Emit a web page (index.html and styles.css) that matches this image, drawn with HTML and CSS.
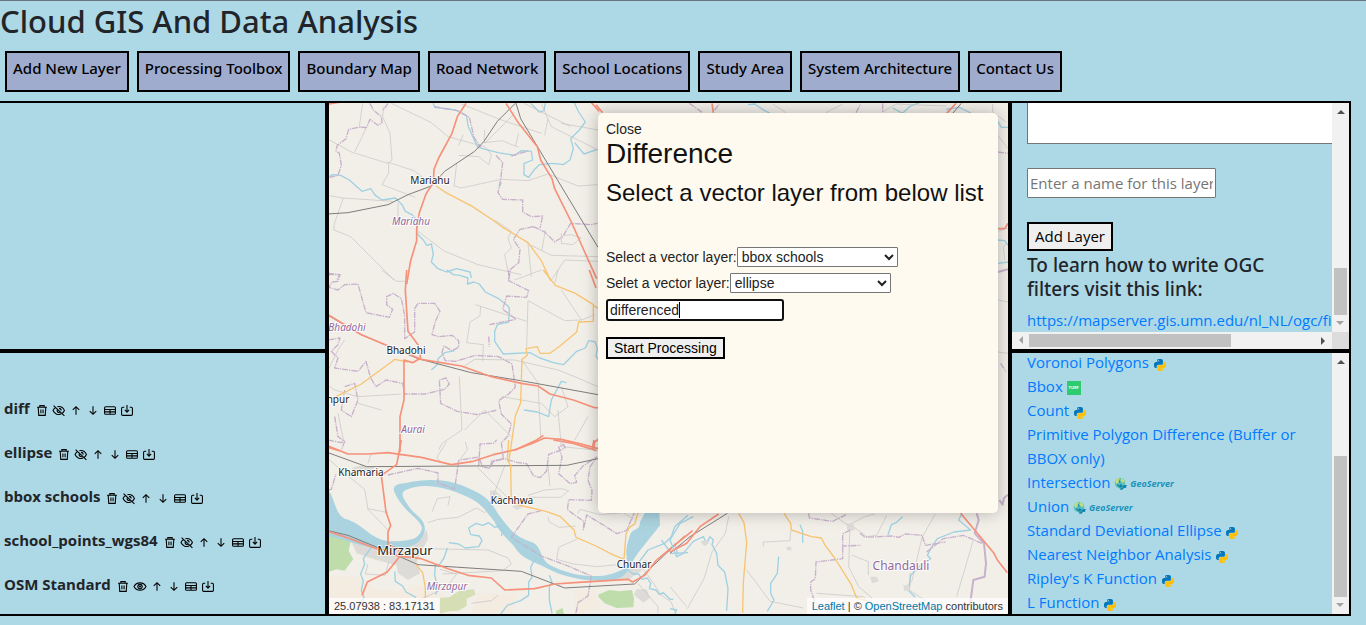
FILE: index.html
```
<!DOCTYPE html>
<html lang="en">
<head>
<meta charset="utf-8">
<title>Cloud GIS And Data Analysis</title>
<link rel="stylesheet" href="styles.css">
</head>
<body>
<svg class="defs" aria-hidden="true">
  <symbol id="trash" viewBox="0 0 24 24"><path d="M3 6h18M8 6V3h8v3M5 6l1 15h12l1-15M10 10v7M14 10v7"/></symbol>
  <symbol id="eye-off" viewBox="0 0 24 24"><path d="M2 3l20 19M9 5c6-1 11 2 13 7-1 2-2 4-4 5M6 6c-2 1-4 4-5 6 3 7 10 9 15 6M9 10c-2 4 2 7 5 5M12 8c2 0 4 2 4 4"/></symbol>
  <symbol id="eye" viewBox="0 0 24 24"><path d="M1 12c4-9 18-9 22 0-4 9-18 9-22 0z"/><circle cx="12" cy="12" r="4"/><circle cx="12" cy="12" r="1"/></symbol>
  <symbol id="up" viewBox="0 0 24 24"><path d="M12 20V5M6 11l6-6 6 6"/></symbol>
  <symbol id="down" viewBox="0 0 24 24"><path d="M12 4v15M6 13l6 6 6-6"/></symbol>
  <symbol id="table" viewBox="0 0 24 24"><path d="M4 5h16q2 0 2 2v10q0 2-2 2H4q-2 0-2-2V7q0-2 2-2zM2 10h20M2 14.500h20M12 10v9"/></symbol>
  <symbol id="save" viewBox="0 0 24 24"><path d="M7 6H4q-2 0-2 2v11q0 2 2 2h16q2 0 2-2V8q0-2-2-2h-3M12 2v13M8 11l4 4 4-4"/></symbol>
  <symbol id="python" viewBox="0 0 24 24">
    <path fill="#0277bd" d="M14.25.18l.9.2.73.26.59.3.45.32.34.34.25.34.16.33.1.3.04.26.02.2-.01.13V8.5l-.05.63-.13.55-.21.46-.26.38-.3.31-.33.25-.35.19-.35.14-.33.1-.3.07-.26.04-.21.02H8.77l-.69.05-.59.14-.5.22-.41.27-.33.32-.27.35-.2.36-.15.37-.1.35-.07.32-.04.27-.02.21v3.06H3.17l-.21-.03-.28-.07-.32-.12-.35-.18-.36-.26-.36-.36-.35-.46-.32-.59-.28-.73-.21-.88-.14-1.05-.05-1.23.06-1.22.16-1.04.24-.87.32-.71.36-.57.4-.44.42-.33.42-.24.4-.16.36-.1.32-.05.24-.01h.16l.06.01h8.16v-.83H6.18l-.01-2.75-.02-.37.05-.34.11-.31.17-.28.25-.26.31-.23.38-.2.44-.18.51-.15.58-.12.64-.1.71-.06.77-.04.84-.02 1.27.05zm-6.3 1.98l-.23.33-.08.41.08.41.23.34.33.22.41.09.41-.09.33-.22.23-.34.08-.41-.08-.41-.23-.33-.33-.22-.41-.09-.41.09z"/>
    <path fill="#ffc107" transform="rotate(180 12 12)" d="M14.25.18l.9.2.73.26.59.3.45.32.34.34.25.34.16.33.1.3.04.26.02.2-.01.13V8.5l-.05.63-.13.55-.21.46-.26.38-.3.31-.33.25-.35.19-.35.14-.33.1-.3.07-.26.04-.21.02H8.77l-.69.05-.59.14-.5.22-.41.27-.33.32-.27.35-.2.36-.15.37-.1.35-.07.32-.04.27-.02.21v3.06H3.17l-.21-.03-.28-.07-.32-.12-.35-.18-.36-.26-.36-.36-.35-.46-.32-.59-.28-.73-.21-.88-.14-1.05-.05-1.23.06-1.22.16-1.04.24-.87.32-.71.36-.57.4-.44.42-.33.42-.24.4-.16.36-.1.32-.05.24-.01h.16l.06.01h8.16v-.83H6.18l-.01-2.75-.02-.37.05-.34.11-.31.17-.28.25-.26.31-.23.38-.2.44-.18.51-.15.58-.12.64-.1.71-.06.77-.04.84-.02 1.27.05zm-6.3 1.98l-.23.33-.08.41.08.41.23.34.33.22.41.09.41-.09.33-.22.23-.34.08-.41-.08-.41-.23-.33-.33-.22-.41-.09-.41.09z"/>
  </symbol>
  <symbol id="globe" viewBox="0 0 42 42">
    <circle cx="18" cy="18" r="16" fill="#5cc0b8"/>
    <path fill="#c5dc7a" d="M3 13Q8 3 17 3L14 15 8 22zM21 3q9 3 12 11l-8 3-5-6z"/>
    <path fill="#0f80b4" d="M14 8l5 5-1 7 5 3 3 4 6-3 9 1-5 3 1 4-7 1-6 6-5-2-2-6-6-4-3-6 6 2 3 3 2-3-3-7z"/>
    <path fill="#35a7a7" d="M16 32l4 8 3-6 7-3-5-3z"/>
  </symbol>
</svg>

<header class="header">
  <h1 class="title">Cloud GIS And Data Analysis</h1>
  <nav class="nav">
    <button class="nav-button">Add New Layer</button>
    <button class="nav-button">Processing Toolbox</button>
    <button class="nav-button">Boundary Map</button>
    <button class="nav-button">Road Network</button>
    <button class="nav-button">School Locations</button>
    <button class="nav-button">Study Area</button>
    <button class="nav-button">System Architecture</button>
    <button class="nav-button">Contact Us</button>
  </nav>
</header>

<main class="main">
  <section class="side left">
    <div class="legend"></div>
    <div class="layers">
      <div class="layer"><span>diff</span>
        <button class="tool" aria-label="Delete"><svg><use href="#trash"/></svg></button><button class="tool" aria-label="Hide"><svg><use href="#eye-off"/></svg></button><button class="tool" aria-label="Move up"><svg><use href="#up"/></svg></button><button class="tool" aria-label="Move down"><svg><use href="#down"/></svg></button><button class="tool" aria-label="Table"><svg><use href="#table"/></svg></button><button class="tool" aria-label="Download"><svg><use href="#save"/></svg></button></div>
      <div class="layer"><span>ellipse</span>
        <button class="tool" aria-label="Delete"><svg><use href="#trash"/></svg></button><button class="tool" aria-label="Hide"><svg><use href="#eye-off"/></svg></button><button class="tool" aria-label="Move up"><svg><use href="#up"/></svg></button><button class="tool" aria-label="Move down"><svg><use href="#down"/></svg></button><button class="tool" aria-label="Table"><svg><use href="#table"/></svg></button><button class="tool" aria-label="Download"><svg><use href="#save"/></svg></button></div>
      <div class="layer"><span>bbox schools</span>
        <button class="tool" aria-label="Delete"><svg><use href="#trash"/></svg></button><button class="tool" aria-label="Hide"><svg><use href="#eye-off"/></svg></button><button class="tool" aria-label="Move up"><svg><use href="#up"/></svg></button><button class="tool" aria-label="Move down"><svg><use href="#down"/></svg></button><button class="tool" aria-label="Table"><svg><use href="#table"/></svg></button><button class="tool" aria-label="Download"><svg><use href="#save"/></svg></button></div>
      <div class="layer"><span>school_points_wgs84</span>
        <button class="tool" aria-label="Delete"><svg><use href="#trash"/></svg></button><button class="tool" aria-label="Hide"><svg><use href="#eye-off"/></svg></button><button class="tool" aria-label="Move up"><svg><use href="#up"/></svg></button><button class="tool" aria-label="Move down"><svg><use href="#down"/></svg></button><button class="tool" aria-label="Table"><svg><use href="#table"/></svg></button><button class="tool" aria-label="Download"><svg><use href="#save"/></svg></button></div>
      <div class="layer"><span>OSM Standard</span>
        <button class="tool" aria-label="Delete"><svg><use href="#trash"/></svg></button><button class="tool" aria-label="Show"><svg><use href="#eye"/></svg></button><button class="tool" aria-label="Move up"><svg><use href="#up"/></svg></button><button class="tool" aria-label="Move down"><svg><use href="#down"/></svg></button><button class="tool" aria-label="Table"><svg><use href="#table"/></svg></button><button class="tool" aria-label="Download"><svg><use href="#save"/></svg></button></div>
    </div>
  </section>

  <section class="map">
    <svg class="map-canvas" viewBox="329 103 679 511" preserveAspectRatio="xMidYMid slice" role="img" aria-label="Map">
      <!-- south-west: river, forest and towns -->
      <g transform="translate(328 440) scale(.333333)">
        <path class="urban" d="M60 284l60 8 60 20 50 6 50-20 16-30 4 30-20 36-14 30 10 36-36 20-30-20-4-24-60-16-60-20zM72 84l28-8 40 6-10 14-50 4zM486 150l20 4 20 22-20 14-20-14zM552 198l24-4 8 8-18 8zM872 400l50-20 30-20 10 6-26 30-36 24-28-4zM926 448l30 0 10 26-20 14-28-24z"/>
        <path class="scrub" d="M0 410l90 0 60 40 60 4 60-20 70 20 30 70H0zM740 450l60 0 20 60-80 10zM450 460l120 0-20 60-120 0z"/>
        <path class="wood" d="M0 280l42 6 26 20-6 26 14 26-16 20-10 14-24-4-26 8zM810 464l34-14 30 4 38-4 6 26-2 26-50 2-36-14-18-18zM684 512l20-8 4 18-24 0z"/>
        <path class="grass" d="M334 474l30-2 30-20 44-4 4 16-26 12 0 22-24 14-30 2-30 8z"/>
        <path class="river" d="M0 148c22 30 20 72 50 88 60 16 70 60 136 68 60 0 90-6 96-40-6-30-60-50-84-110-4-20 10-22 40-26 70-16 140-8 190 20 40 16 64 40 80 70 30 40 50 70 96 86 40 10 28 50 60 70 50 26 100 36 150 34 30-2 46-10 76-22 20-30-10-30 16-100 6-24 30-10 30-40l16-30 42 0 2 40c-30 40-64 76-84 112-14 36-34 50-66 54-60 4-140-10-186-36-50-24-80-30-104-70-10-10-50-50-56-70-24-30-40-54-64-66-50-28-120-48-170-40-50 10-50 20-30 50 20 36 60 44 54 84-10 50-70 56-130 52-60-4-120-32-160-38z"/>
        <path class="stream" d="M130 322l-10 14-14 20 4 16-12 30 8 20-6 30 8 20-20 30M200 394l2 30 22 14 10 18 30 16M322 374l-2 30 8 40-4 20M358 324l-10 30-18 26M362 308l30 4 20 12 40-4 10-18-8-14-26-4-6-20 22-14 20 6 18-8 18 14 16-4 8 14-4 16M628 354l-10 8-10 20 4 30-10 14 0 40-24 16-40 14-20 26M664 406l8 20-8 14 0 40 8 40M900 390l16 12 16 0 10 16 16-4 10 16-4 16 20 4 10 14 12-6 20 20 10 0M930 370l30-40 50-20 20-20 10-30 40-34M1000 300l30 40 50-2M1040 310l10 34"/>
        <path class="minor" d="M0 56l50 44 60 48 10 60 64 66M120 206l60 12M130 40l-10 30M356 5l-30 48 10 10M412 5l6 24-22 30M448 82l90 90M530 78l-50 130-10 10-24-14-56 28-60 6-30 10M360 196l6-26-38 6-16 40M600 166l50-16 50-4 22 6-24 20-100 0M660 78l6 60M746 298l-54 24-6 36 50 14 70 8 60-6M660 230l4 16 30 16 50-4M750 220l6-12 60 16 70-6 30 20M290 326l190 4 60 24 10 18-26 20-180 10M120 372l-8 30 60 4 10-40M336 388l50 14-30 40-70 32-70 44M430 490l60-8 20-16M930 366l30 40 40 60 30 20 10 30M930 430l60 70 0 20"/>
        <path class="admin" d="M0 0l40 8 8-8M0 150l10-2 14-46M180 105l90-20 60 14 0 30 50 18 12-86 60-10 12 30 20 4 12-20 30-10 40 12 30 4 20 36 20 6 20-20 6-50 30-10 20-10-6-10-14 8 10 30-10 50 34 30 20-4-6-20 26-30 40-26-20 30-6 40 12 30-2 30-68-2-4 30 50 36-2 24 10-44 50 30 40 26 30-10 26-60M452 78l4-66 40-2 10-10M640 212l-40 10-50 70 90 56 80 30 70 30-10 60-30 20-8 40"/>
        <path class="rail" d="M0 38l116 42 600-4 94-20M0 272l60 14 160 66 50 22 310 20 130 50 210-12 50-50 100-94"/>
        <path class="orange" d="M542 0l-4 60 10 16 2 110 34 12 70 16 44 16 40 40 6 22 60 26 50 26 34 14 6-76 10-20 16-10 10-34M264 374l20 24 8 46 0 30"/>
        <path class="red" d="M220 0l-14 74-46 32 14 110 14 40-8 20 0 40 30 10 8 20-40 50-60 30-16 40M0 18l60 24 60 0 60-4 100 14 90 22 66-10 60-20 70-16 60-28 20-14M676 0l60 10 70 22M792 30l6-30M0 274l60 20 80 30 70 24 70 8 80 30 60 20 70 8 40 36 90-4 60-14 60-4 160-10 14 8 36-20 34-44 60-50 50-40"/>
      </g>
      <!-- north-west: Mariahu -->
      <g transform="translate(328 100) scale(.333333)">
        <path class="stream" d="M0 234l12-10 26 2 26 14 38 34 26-8 14 20 20 14 40-6 20 20 10 20 20 10 14 16 0 40 20 20 10 16 14-4 6 30-6 24 20 20 26 10 30-10 40 10 4 18M316 10l4 12 62 8 34 18 4 30 18 40 12 24 60 16 50 8 20-14 30 2 4 26-26 10 0 34 14 8 16-22 16-16 40-4 32 4 20-14 10-34-8-30 26-26 18-24-20-30-14-30M740 128l28 34 40-14M608 10l26 26 14-4 4-24M520 248l-6 12"/>
        <path class="minor" d="M104 10l-10 68 20 8-34 70M166 20l-2 30 22 50 6 80-10 10 0 30-20 34 100 38M178 186l80 26 50 40M0 118l70 38 110 34M0 286l44 8 150 10M46 294l-28 80 0 16 50 20 60 60 70 70M190 10l120 58 50 42 110 30 20 24-8 30-30-24-60-4M400 12l120 48 120 40M406 104l-14 32M470 90l-2 38 54-6 50 20M572 100l-10 38M380 258l20 6 120-26 80 4 60-20 90 36 60-4M386 190l-8 70M640 10l30 70 160 80 M660 56l-10 50M700 70l110 20M588 10l140 70M270 394l80 60 100 40 130 30M500 360l50 34-10 20 10 30-20 20 10 50M600 430l10 100M670 540l40-60 100 4M610 436l60 30 140 4M652 390l-10 60M700 400l0 30 34 4 26-20-30-10-20 2M560 40l-90 90M210 310l0 50"/>
        <path class="admin" d="M126 10l10 20 24 20 2 18-12 8-24-18-10 24-26 0-28 6-8 28-26 20-4 16 10 8 6 36-10 30-24 6M180 10l-14 20M504 166l20 22-6 50-8 40 14 20 60 2 0 36 26 14 34-2-8 36 M616 380l-40 8-20 30 20 30-4 40-24 20-6 32M616 380l34 16 30 30 24-16 24-40 60 4 20-4M0 520l36 4-10 16M320 20l70 12 34 20 14 60 20 30M550 168l52-16"/>
        <path class="rail" d="M0 342l60-4 120-24 60-30 70-26 40-44 90-60 28-30 40-60 54-54M564 10l14 46 60 100 172 286"/>
        <path class="orange" d="M324 258l30 20 80 42 60 40 30 22 76 46 40 54 28 60"/>
        <path class="red" d="M0 12l40-6M414 10l-26 40-16 50-40 74-14 34-2 40-22 34-20 56-8 50 0 34-18 60-12 70M534 10l38 60 56 70 10 40 34 56 8 30 50 100 40 90 36 80M790 8l24 26"/>
      </g>
      <!-- west: Bhadohi and Aurai -->
      <g transform="translate(328 270) scale(.333333)">
        <path class="stream" d="M356 0l20 14 20 2 24 8-2 18 20-6 16 6 18 24 40 20 24 18 8 10-2 42-34 8-8 20 0 30 26 38 80-4 30 16 40 14 30 6 30-30 10-10 26-10 10-22 20 4 6 20-4 22 14 20 22-4M380 242l-30 6-20 18 0 16-20 18M588 420l40 6 34 14 8-50 30-56 16 4"/>
        <path class="minor" d="M160 0l46 34 28 0M442 104l154 50M458 108l-2 30-30 18-10 62 50 6-2 50M600 92l-4 140M600 92l110 60 50-2 40-16M700 60l60 90M690 0l-10 40M440 268l-30 20M440 268l120 2 130 30 50 20 70 30M580 268l50 70 8 160M394 320l8 160-60 40-10 20M470 420l80 80M520 380l120 20 40 40 40-30-20-60M690 420l10 110 100 10M780 440l-40 70M560 30l80-30M0 300l30-60 20-30M0 346l20 14 70 20 130-8M90 400l70 20M30 430l16 80M470 420l-60 60"/>
        <path class="admin" d="M0 14l36 0-6 20-18 2-10 16 28 8 20-16 40-2 10 36 14 50 70 14 10-24-18-14 0-24 20-10 24 16 10 50 0 70 30-20 0-70 10-16 50 0 16 24-14 30-10 40 20 6 40-4 20 16 0 20-20 10-24-14-6 20 10 24 30 2 60-18 70 4 40 22 10 70-20 20-30 20 8 40 30 30-10 36-20 20 6 50-34 4-6 20M542 0l0 32 60 30-6 20-60-4-12 40 20 14 20 16-50 10-30 6M482 200l2 30M0 210l36-6-6 20-20 20 20 20-10 30 70 10 24-30 14 50 16 26 30-20 50 10 6 32 60 0 60-14 14-16-10-18-20 6 4 70 50 24 60 10 60-14M50 350l30-10 10 50-20 50-30-20 10-60M20 440l10 60 20 14-10 26"/>
        <path class="rail" d="M0 136l100 58 170 72 160 42 160 26 220 40"/>
        <path class="orange" d="M20 382l80-40 90-66 10-8 40 8M646 0l36 46 60 24 54 34 0 50-44 2-6 30-50 42-30 22-30 0-8-20-34 6 4 20-16 12-4 130-16 40-20 140M796 106l16 10"/>
        <path class="red" d="M236 0l-4 60 8 124 30 40 8 40-24 14-26-8 0 120-12 50 0 106M0 134l100 60 90 38 90 36 120 20 90 32 90 20 50 8 36 24 70 18 60 22 16 2M784 0l20 54M0 532l34 10M796 540l4-24 16-12"/>
        <path class="red" d="M560 540l54-20 36-16 50 4 60 14 50 14"/>
      </g>
      <!-- south-east: Chandauli -->
      <g transform="translate(670 490) scale(.333333)">
        <path class="stream" d="M70 80l-40 20-30 50 20 50 20-10 30-36 30-14 10 20 10-20 10 10-4 14 14 26 4 36 20 20 10 50-4 66M326 200l-4 50-20 30 0 30 10 20-20 34M390 104l8 20 0 34M698 80l-20 18-14 6-10 30M876 70l-10 20 36 30-50 6-50 20-20 30-10 20 10 10-30 20-30 30-6 46 20 20M0 356l20 4-6 14"/>
        <path class="minor" d="M176 80l-10 50-40 56-24 80-50 90M230 240l30 40 40 54 100 20M280 170l0-14 80-4 2-30M484 70l50 36 50-26 30-8M550 110l40 30 30-4 20-40 10-20M540 110l-4 120 30 60 40 34M545 195l50 20 0 40M440 310l140 10 30 30M796 72l-40 70-30 130-20 20 60 40M910 150l-50 170M440 350l70-10M0 290l50 60M720 250l0 40"/>
        <path class="urban" d="M528 100l24 4 2 16-20 6zM90 155l20-6 8 10-14 10zM600 260l20 0 6 14-20 6zM700 284l18 4 0 14-16 0zM350 170l14 0 0 12-14-2z"/>
        <path class="admin" d="M416 70l2 14 70 10 40-20M540 120l-22 12 0 36 54-2M570 130l16 12 80-4 20 4 20-10 50 4 10 30 60-10M518 170l0 36-80 10-2 50-14 10 0 24 14 40M770 186l50-40 60-10 60 26"/>
        <path class="admin thick" d="M920 70l6 20-12 40 28 30 6 60-4 40-34 10-8 60-10 34M988 30l10 14 4-20 12-10"/>
        <path class="rail" d="M172 70L60 140 0 190"/>
        <path class="orange" d="M206 70l16 28 8 60-10 120-2 90M342 70l20 30 2 20 60 20 30 4 10 20 30 40 50 80 16 40 40 10"/>
        <path class="red" d="M146 72L90 110 50 160 0 186M872 70l50 60 50 60 10 20 30 38"/>
      </g>
      <!-- north-east margin -->
      <g transform="translate(596 100) scale(.333333)">
        <path class="stream" d="M456 14l20-2 30 20 20 10M890 24l30 16 20-20 30-12M1050 28l40-6 40 20M1204 62l12 20 20 0M1206 420l20 2 10 14M1206 490l30-4"/>
        <path class="minor" d="M530 12l40 26M740 12l-50 26M860 36l40-24 150 6M1190 12l0 24 40 30M1206 106l30 40M1206 394l30-10M1230 430l-8 10 4 40M1206 600l30 6M1206 756l30 4"/>
        <path class="admin" d="M280 10l40 28M356 30l14-18M780 38l14-26M860 10l0 28M1206 156l30 4M1214 790l16 26"/>
        <path class="admin thick" d="M1206 516l30-8"/>
        <path class="red" d="M0 14l20 24M348 10l4 28M1080 10l-28 30M1206 386l20 0 10-16"/>
        <path class="rail" d="M1096 10l-26 30"/>
      </g>
      <text class="town" x="430" y="184">Mariahu</text>
      <text class="district" x="411" y="225">Mariahu</text>
      <text class="district" x="347" y="331">Bhadohi</text>
      <text class="town" x="406" y="354">Bhadohi</text>
      <text class="town" x="338" y="403">npur</text>
      <text class="district" x="413" y="433">Aurai</text>
      <text class="town" x="361" y="476">Khamaria</text>
      <text class="town" x="512" y="504">Kachhwa</text>
      <text class="city" x="405" y="555">Mirzapur</text>
      <text class="district" x="447" y="590">Mirzapur</text>
      <text class="town" x="634" y="568">Chunar</text>
      <text class="region" x="901" y="570">Chandauli</text>
    </svg>
    <div class="coordinates">25.07938 : 83.17131</div>
    <div class="attribution"><a href="#">Leaflet</a> | © <a href="#">OpenStreetMap</a> contributors</div>

    <form class="dialog">
      <button type="button" class="close">Close</button>
      <h2 class="dialog-title">Difference</h2>
      <h3 class="dialog-subtitle">Select a vector layer from below list</h3>
      <div class="field"><label for="first">Select a vector layer:</label><select id="first"><option>bbox schools</option></select></div>
      <div class="field"><label for="second">Selet a vector layer:</label><select id="second"><option>ellipse</option></select></div>
      <div class="name-field"><input class="name" type="text" aria-label="Output layer name" value="differenced"><span class="caret"></span></div>
      <button type="button" class="start">Start Processing</button>
    </form>
  </section>

  <section class="side right">
    <div class="panel add-panel">
      <div class="panel-content">
        <textarea class="filter" aria-label="OGC filter"></textarea>
        <input class="layer-name" type="text" placeholder="Enter a name for this layer" aria-label="Layer name">
        <button class="add">Add Layer</button>
        <h5 class="hint">To learn how to write OGC filters visit this link:</h5>
        <a class="link" href="#">https://mapserver.gis.umn.edu/nl_NL/ogc/filter</a>
      </div>
      <div class="bar vertical"><i class="arrow"></i><i class="space lead-a"></i><i class="thumb thumb-a"></i><i class="arrow flip faint"></i></div>
      <div class="bar horizontal"><i class="arrow west faint"></i><i class="thumb thumb-h"></i><i class="space trail-h"></i><i class="arrow east"></i></div>
      <div class="corner"></div>
    </div>
    <div class="panel tools-panel">
      <div class="panel-content tools">
        <div><a href="#">Voronoi Polygons</a> <svg class="py"><use href="#python"/></svg></div>
        <div><a href="#">Bbox</a> <span class="turf">TURF</span></div>
        <div><a href="#">Count</a> <svg class="py"><use href="#python"/></svg></div>
        <div><a href="#">Primitive Polygon Difference (Buffer or<br>BBOX only)</a></div>
        <div><a href="#">Intersection</a> <span class="geo"><svg><use href="#globe"/></svg>GeoServer</span></div>
        <div><a href="#">Union</a> <span class="geo"><svg><use href="#globe"/></svg>GeoServer</span></div>
        <div><a href="#">Standard Deviational Ellipse</a> <svg class="py"><use href="#python"/></svg></div>
        <div><a href="#">Nearest Neighbor Analysis</a> <svg class="py"><use href="#python"/></svg></div>
        <div><a href="#">Ripley's K Function</a> <svg class="py"><use href="#python"/></svg></div>
        <div><a href="#">L Function</a> <svg class="py"><use href="#python"/></svg></div>
      </div>
      <div class="bar vertical"><i class="arrow"></i><i class="space lead-b"></i><i class="thumb thumb-b"></i><i class="arrow flip faint"></i></div>
    </div>
  </section>
</main>
</body>
</html>
```
FILE: styles.css
```
* { box-sizing: border-box; }

body {
  margin: 0;
  height: 100vh;
  display: flex;
  flex-direction: column;
  background: #add8e6;
  border-top: 1px solid #6c757d;
  color: #212529;
  font-family: "Open Sans", "Noto Sans", sans-serif;
  font-size: 15px;
  line-height: 24px;
  overflow: hidden;
}

a { color: #007bff; text-decoration: none; }
button, input, select, textarea { font: inherit; color: inherit; }
h1, h2, h3, h5 { margin: 0; font-weight: 500; }
.defs { position: absolute; width: 0; height: 0; }

.title { font-family: "Noto Sans", sans-serif; font-size: 31px; line-height: 40px; }
.nav { display: flex; gap: 8px; padding: 10px 5px 9px; }
.nav-button {
  height: 41px;
  padding: 0 6px 8px;
  border: 2px solid #000;
  background: #9facce;
  color: #000;
  font-family: "Noto Sans", sans-serif;
  font-weight: 500;
  white-space: nowrap;
}

.main {
  flex: 1;
  min-height: 0;
  margin: 0 15px 9px 0;
  display: grid;
  grid-template-columns: 329fr 683fr 339fr;
  border-top: 2px solid #000;
  border-bottom: 2px solid #000;
}
.side { display: grid; grid-template-rows: 250fr 261fr; min-width: 0; min-height: 0; }
.left { border-right: 4px solid #000; }
.right { border-right: 2px solid #000; }
.legend, .add-panel { border-bottom: 4px solid #000; }

.layers { display: flex; flex-direction: column; gap: 20px; padding: 43px 4px 0; overflow: hidden; }
.layer { display: flex; align-items: center; gap: 3px; font-weight: 700; }
.layer span { margin-right: 2px; }
.tool { display: flex; padding: 4px 0 0; border: 0; background: none; }
.tool svg { width: 14px; height: 13px; fill: none; stroke: #000; stroke-width: 2; }

.map { position: relative; min-width: 0; min-height: 0; border-right: 4px solid #000; background: #f2efe9; overflow: hidden; }
.map-canvas { display: block; width: 100%; height: 100%; }
.map-canvas path { fill: none; stroke-linejoin: round; }
.map-canvas .urban { fill: #dddbd8; }
.map-canvas .scrub { fill: #f4ebe1; }
.map-canvas .wood { fill: #bfdcab; }
.map-canvas .grass { fill: #d5deb5; }
.map-canvas .river { fill: #aad3df; }
.stream { stroke: #a0d1e2; stroke-width: 4; }
.minor { stroke: #c4c3c2; stroke-width: 2; }
.admin { stroke: #c8b1cb; stroke-width: 4; stroke-dasharray: 18 3 4 3; }
.admin.thick { stroke-width: 6; stroke-dasharray: none; }
.rail { stroke: #7d7c7a; stroke-width: 3; }
.orange { stroke: #f8c472; stroke-width: 4; }
.red { stroke: #f6917a; stroke-width: 5; }
.map-canvas text {
  font-family: "Noto Sans", sans-serif;
  text-anchor: middle;
  paint-order: stroke;
  stroke: #fffc;
  stroke-width: 2px;
  fill: #222;
}
.map-canvas .town { font-size: 10px; }
.map-canvas .city { font-size: 13px; }
.map-canvas .district { font-size: 10px; font-style: italic; fill: #91689c; }
.map-canvas .region { font-size: 12px; fill: #91689c; }

.coordinates, .attribution {
  position: absolute;
  bottom: 0;
  padding: 0 5px;
  background: #ffffffb3;
  color: #333;
  font: 11px/16px "Liberation Sans", Arial, sans-serif;
}
.coordinates { left: 0; }
.attribution { right: 0; }
.attribution a { color: #0078a8; }

.dialog {
  position: absolute;
  top: 10px;
  right: 10px;
  width: 400px;
  height: 400px;
  padding: 8px;
  border-radius: 5px;
  background: #fffaf0;
  box-shadow: 0 0 16px #0004;
  color: #222;
  font: 14px/20px "Liberation Sans", Arial, sans-serif;
}
.close { display: block; padding: 0; border: 0; background: none; line-height: 16px; }
.dialog-title { color: #111; font-size: 28px; line-height: 34px; font-weight: 400; }
.dialog-subtitle { margin: 6px 0 38px; color: #111; font-size: 24px; line-height: 32px; font-weight: 400; white-space: nowrap; }
.field { display: flex; height: 20px; margin-bottom: 6px; }
.field select { width: 161px; padding: 0; border: 1px solid #767676; border-radius: 1px; background: #fff; }
.name-field { position: relative; width: 178px; height: 22px; margin-bottom: 16px; }
.name { width: 100%; height: 100%; padding: 0 2px; border: 2px solid #101010; border-radius: 3px; background: #fff; outline: 0; }
.caret { position: absolute; left: 73px; top: 3px; width: 1px; height: 16px; background: #000; }
.start { height: 22px; padding: 0 6px; border: 2px solid #000; background: #efefef; color: #000; line-height: 16px; }

.panel { display: grid; grid-template-columns: 1fr 17px; min-height: 0; overflow: hidden; }
.add-panel { grid-template-rows: 1fr 17px; }
.panel-content { min-width: 0; min-height: 0; padding-left: 15px; overflow: hidden; display: flex; flex-direction: column; align-items: flex-start; }
.filter { width: 340px; height: 41px; margin-bottom: 24px; border: 1px solid #767676; border-top: 0; background: #fff; resize: none; flex: none; }
.layer-name { width: 189px; height: 30px; margin-bottom: 24px; padding: 1px 2px; border: 1px solid #767676; border-radius: 1px; }
.layer-name::placeholder { color: #757575; }
.add { height: 30px; padding: 0 6px; border: 2px solid #000; background: #efefef; color: #000; }
.hint { width: 270px; margin: 2px 0 7px; font-family: "Noto Sans", sans-serif; font-size: 19px; }
.link { white-space: nowrap; }

.tools { justify-content: flex-end; white-space: nowrap; }
.tools > div { flex: none; height: 24px; }
.tools > div:has(br) { height: 48px; }
.py { width: 12px; height: 12px; vertical-align: -3px; margin-left: 1px; }
.turf {
  display: inline-block;
  width: 14px;
  height: 14px;
  background: #2ecc71;
  color: #fff;
  font-size: 4px;
  font-weight: 700;
  line-height: 14px;
  text-align: center;
  vertical-align: middle;
}
.geo { display: inline-flex; align-items: center; gap: 2px; color: #1a93bb; font-size: 9px; font-style: italic; font-weight: 700; line-height: 14px; vertical-align: middle; }
.geo svg { width: 14px; height: 14px; }

.bar { display: flex; background: #f1f1f1; }
.vertical { flex-direction: column; align-items: center; }
.horizontal { align-items: center; }
.corner { background: #dcdcdc; }
.thumb { background: #c1c1c1; }
.vertical .thumb { width: 13px; }
.horizontal .thumb { height: 13px; }
.lead-a { flex: 148; }
.thumb-a { flex: 47; }
.lead-b { flex: 86; }
.thumb-b { flex: 141; }
.thumb-h { flex: 202; }
.trail-h { flex: 84; }
.arrow { display: grid; place-items: center; width: 17px; height: 17px; }
.arrow::before { content: ""; border: 4px solid transparent; border-top: 0; border-bottom-color: #505050; }
.faint::before { border-bottom-color: #a3a3a3; }
.flip { transform: rotate(180deg); }
.west { transform: rotate(-90deg); }
.east { transform: rotate(90deg); }
```
